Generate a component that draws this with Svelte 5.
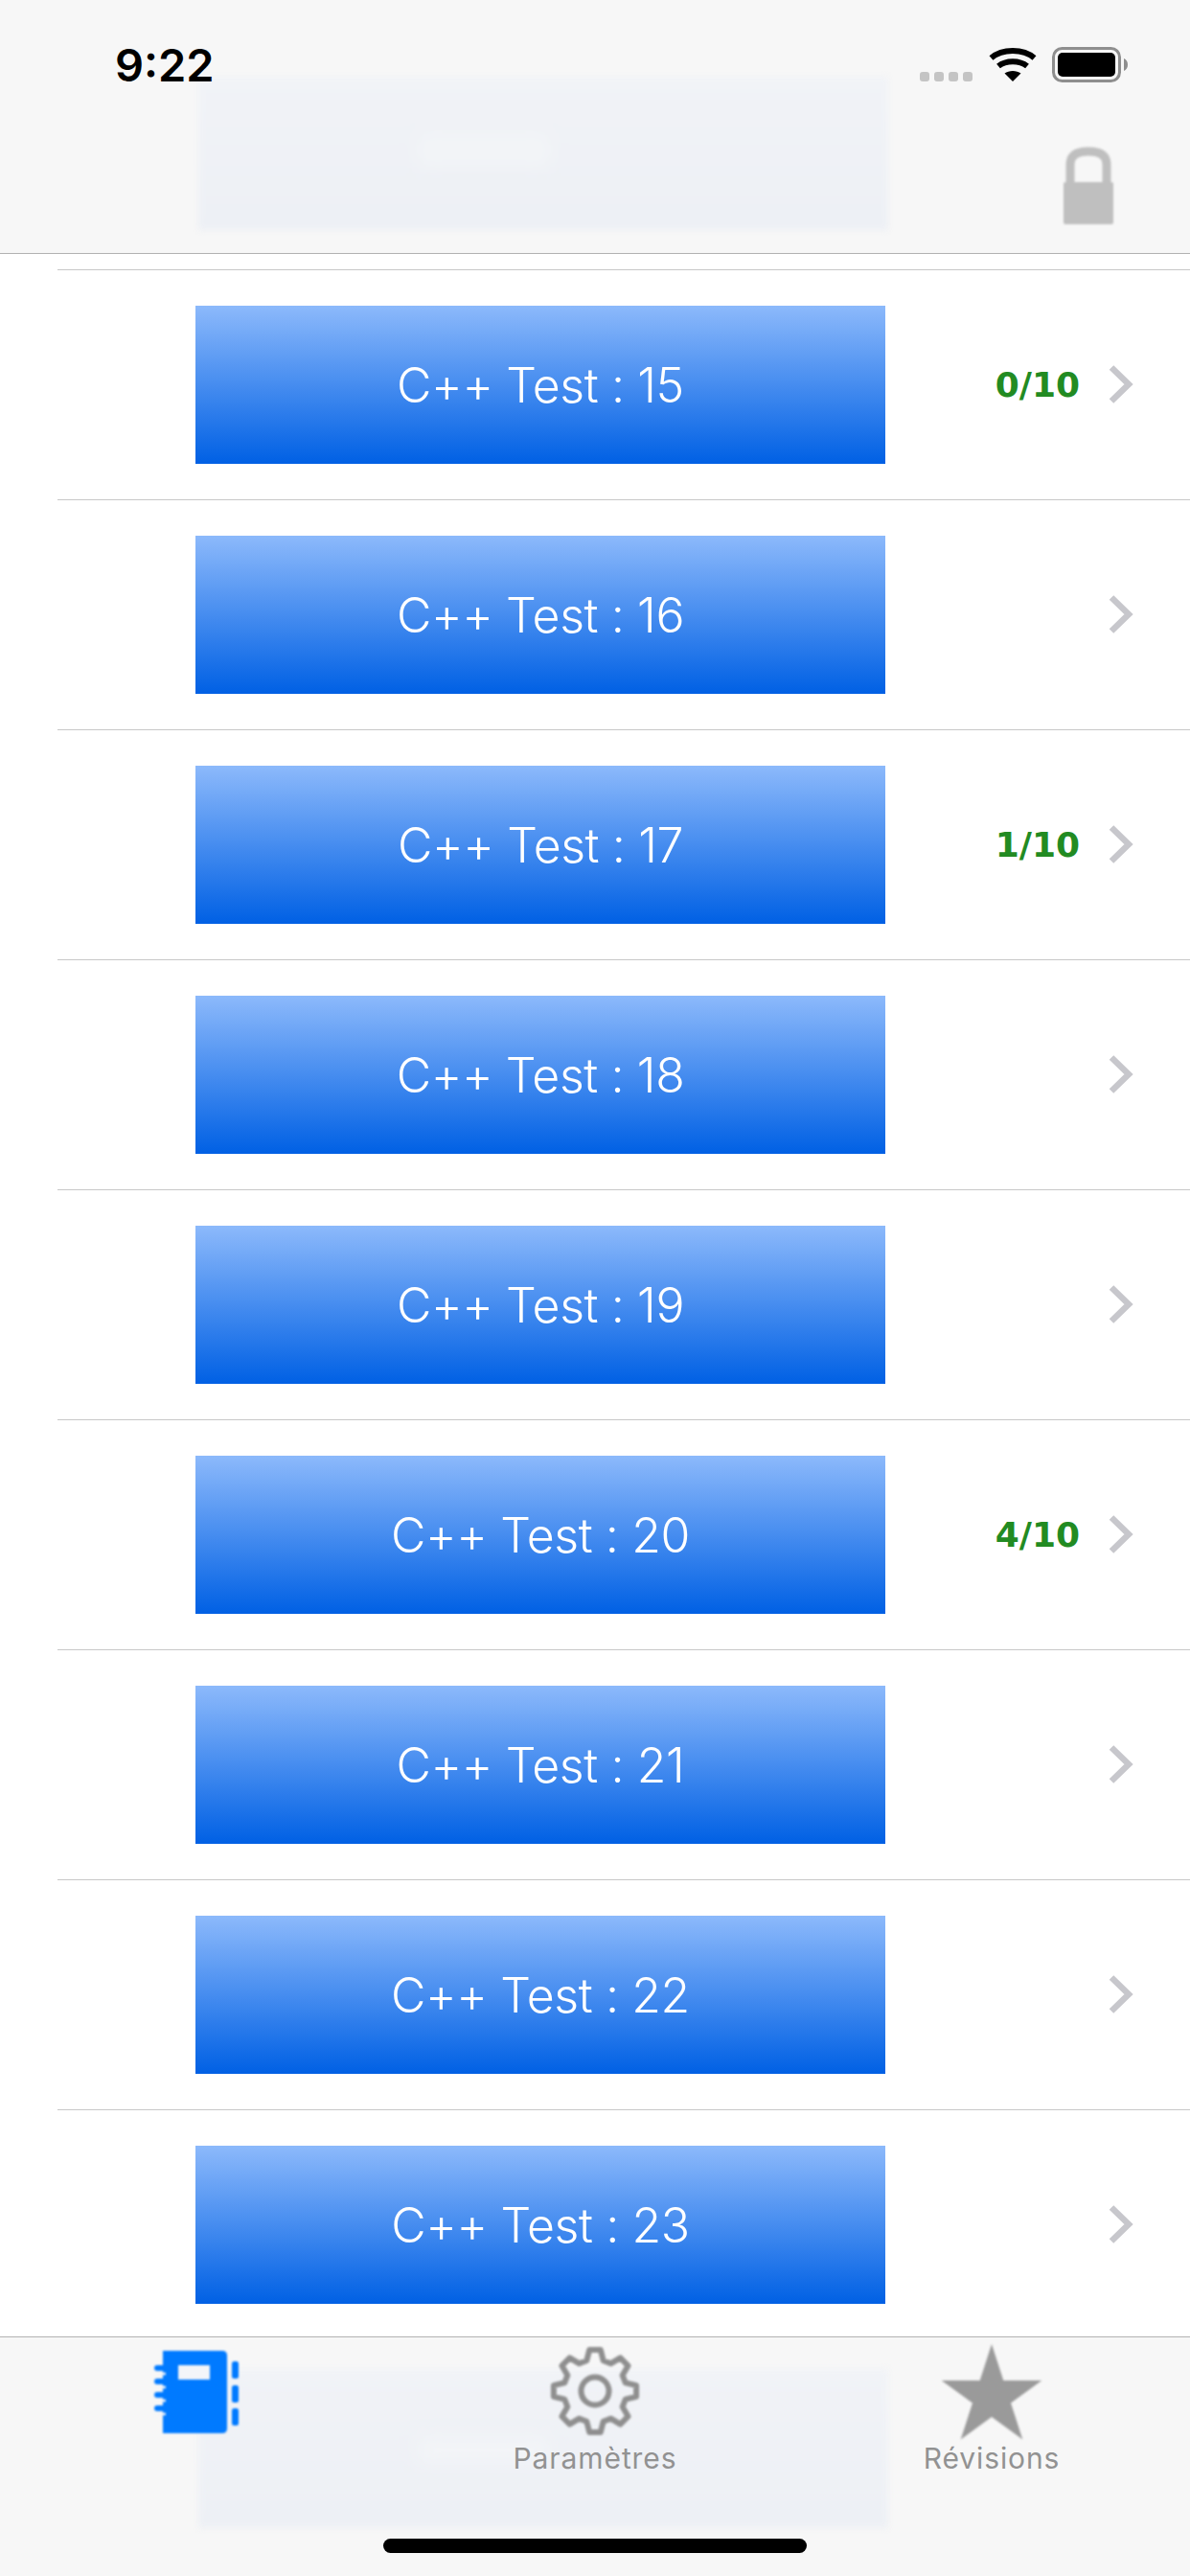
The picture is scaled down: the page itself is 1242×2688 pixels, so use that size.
<script>
  const rows = [
    { n: 15, score: '0/10' },
    { n: 16 },
    { n: 17, score: '1/10' },
    { n: 18 },
    { n: 19 },
    { n: 20, score: '4/10' },
    { n: 21 },
    { n: 22 },
    { n: 23 }
  ];

  function gearPath(cx, cy, outer, inner, teeth) {
    const step = (Math.PI * 2) / teeth;
    let d = '';
    for (let i = 0; i < teeth; i++) {
      const a = -Math.PI / 2 + i * step;
      const pts = [
        [inner, a - step * 0.34],
        [outer, a - step * 0.17],
        [outer, a + step * 0.17],
        [inner, a + step * 0.34]
      ];
      for (const [r, t] of pts) {
        d += (d ? 'L' : 'M') + (cx + r * Math.cos(t)).toFixed(1) + ' ' + (cy + r * Math.sin(t)).toFixed(1);
      }
    }
    return d + 'Z';
  }
  const gear = gearPath(50, 49, 43.5, 33, 8);

  function starPoints(cx, cy, R, r) {
    const pts = [];
    for (let i = 0; i < 10; i++) {
      const a = -Math.PI / 2 + (i * Math.PI) / 5;
      const rad = i % 2 ? r : R;
      pts.push((cx + rad * Math.cos(a)).toFixed(1) + ',' + (cy + rad * Math.sin(a)).toFixed(1));
    }
    return pts.join(' ');
  }
  const star = starPoints(55, 55, 55, 21);
</script>

<div class="screen">
  <header class="top">
    <div class="ghost ghost-top"><i class="smear"></i></div>
    <div class="status">
      <span class="time">9:22</span>
      <svg class="status-icons" width="217" height="37" viewBox="0 0 217 37">
        <g fill="#c4c4c4">
          <rect x="0" y="26" width="10" height="10" rx="3" />
          <rect x="15" y="26" width="10" height="10" rx="3" />
          <rect x="30" y="26" width="10" height="10" rx="3" />
          <rect x="45" y="26" width="10" height="10" rx="3" />
        </g>
        <g fill="none" stroke="#000" stroke-width="6">
          <path d="M74.500 11.500C86 1.500 108 1.500 119.500 11.500" />
          <path d="M82 20C90 13.500 104 13.500 112 20" />
        </g>
        <path d="M88.500 27.500C93 24 101 24 105.500 27.500L97 36Z" fill="#000" />
        <rect x="139.500" y="1.500" width="69" height="34" rx="9" fill="none" stroke="#8e8e8e" stroke-width="3" />
        <rect x="144" y="6" width="60" height="25" rx="5" fill="#000" />
        <path d="M213 12C215.500 13 217 15.500 217 18.500C217 21.500 215.500 24 213 25Z" fill="#8e8e8e" />
      </svg>
    </div>
    <svg class="lock" width="54" height="82" viewBox="0 0 54 82">
      <path d="M8 40V19C8 9 15 5 27 5C39 5 46 9 46 19V40" fill="none" stroke="#bfbfbf" stroke-width="9" />
      <rect x="1" y="37" width="52" height="44" rx="2" fill="#bfbfbf" />
    </svg>
  </header>

  <main class="list">
    {#each rows as row}
      <div class="row">
        <div class="btn">C++ Test : {row.n}</div>
        {#if row.score}
          <span class="score">{row.score}</span>
        {/if}
        <svg class="chev" width="26" height="40" viewBox="0 0 26 40">
          <path d="M3 2.500L21 20L3 37.500" fill="none" stroke="#c7c7cc" stroke-width="6.500" />
        </svg>
      </div>
    {/each}
  </main>

  <footer class="tabs">
    <div class="ghost ghost-bottom"><i class="smear"></i></div>
    <div class="tab">
      <svg class="icon" width="100" height="100" viewBox="5 0 100 100">
        <path d="M18 7H80Q85 7 85 12V88Q85 93 80 93H18Z" fill="#007aff" />
        <rect x="34" y="22" width="33" height="15" fill="#f3f5f9" />
        <g fill="#007aff">
          <rect x="90" y="18" width="7" height="18" rx="2.500" />
          <rect x="90" y="43" width="7" height="18" rx="2.500" />
          <rect x="90" y="67" width="7" height="18" rx="2.500" />
        </g>
        <g stroke="#007aff" stroke-width="6" stroke-linecap="round">
          <path d="M12 25H18" />
          <path d="M12 39H18" />
          <path d="M12 53H18" />
          <path d="M12 67H18" />
        </g>
        <g stroke="#f5f6f8" stroke-width="2.500">
          <path d="M15 31H21" />
          <path d="M15 45H21" />
          <path d="M15 59H21" />
          <path d="M15 73H21" />
        </g>
      </svg>
    </div>
    <div class="tab">
      <svg class="icon" width="100" height="100" viewBox="0 0 100 100">
        <path d={gear} fill="none" stroke="#8f8f8f" stroke-width="6" stroke-linejoin="round" />
        <circle cx="50" cy="49" r="14.500" fill="none" stroke="#8f8f8f" stroke-width="6" />
      </svg>
      <span class="label">Paramètres</span>
    </div>
    <div class="tab">
      <svg class="icon" width="110" height="100" viewBox="0 0 110 100">
        <polygon points={star} fill="#9a9a9a" />
      </svg>
      <span class="label">Révisions</span>
    </div>
    <div class="home"></div>
  </footer>
</div>

<style>
  :global(body) {
    margin: 0;
    background: #fff;
  }
  .screen {
    width: 1242px;
    height: 2688px;
    display: flex;
    flex-direction: column;
    overflow: hidden;
    font-family: Inter, "Liberation Sans", sans-serif;
    background: #fff;
  }
  .top {
    position: relative;
    flex: none;
    height: 264px;
    background: #f7f7f7;
    border-bottom: 1px solid #b2b2b2;
    display: flex;
    flex-direction: column;
    overflow: hidden;
  }
  .ghost {
    position: absolute;
    left: 207px;
    width: 720px;
    background: linear-gradient(#f1f3f7, #edf0f5);
    filter: blur(3px);
  }
  .smear {
    position: absolute;
    left: 228px;
    width: 140px;
    background: #f2f4f7;
    filter: blur(8px);
  }
  .ghost-top {
    top: 80px;
    height: 160px;
  }
  .ghost-top .smear {
    top: 60px;
    height: 34px;
  }
  .ghost-bottom {
    top: 33px;
    height: 166px;
  }
  .ghost-bottom .smear {
    top: 70px;
    height: 30px;
  }
  .status {
    position: relative;
    display: flex;
    justify-content: space-between;
    align-items: flex-start;
    padding: 49px 65px 0 120px;
  }
  .time {
    font-size: 47px;
    font-weight: 600;
    line-height: 37px;
    color: #000;
  }
  .status-icons {
    display: block;
  }
  .lock {
    position: relative;
    display: block;
    align-self: flex-end;
    margin: 67px 79px 0 0;
    filter: blur(1px);
  }
  .list {
    flex: 1;
    min-height: 0;
    overflow: hidden;
    padding-top: 16px;
  }
  .row {
    box-sizing: border-box;
    height: 240px;
    margin-left: 60px;
    padding: 37px 59px 0 144px;
    border-top: 1px solid #c8c8c8;
    display: flex;
    align-items: flex-start;
  }
  .btn {
    flex: none;
    width: 720px;
    height: 165px;
    display: flex;
    align-items: center;
    justify-content: center;
    color: #fff;
    font-size: 50px;
    font-weight: 350;
    letter-spacing: -0.4px;
    background: linear-gradient(#8cb9fb, #0060e4);
  }
  .score {
    margin-left: auto;
    height: 165px;
    line-height: 165px;
    font-family: "DejaVu Sans", sans-serif;
    font-weight: 700;
    font-size: 36px;
    color: #228b22;
  }
  .chev {
    flex: none;
    display: block;
    margin: 62px 0 0 30px;
  }
  .row .btn + .chev {
    margin-left: auto;
  }
  .tabs {
    position: relative;
    flex: none;
    box-sizing: border-box;
    height: 250px;
    background: #f7f7f7;
    border-top: 1px solid #b2b2b2;
    display: grid;
    grid-template-columns: repeat(3, 414px);
    align-items: start;
    overflow: hidden;
  }
  .tab {
    position: relative;
    display: flex;
    flex-direction: column;
    align-items: center;
    padding-top: 7px;
  }
  .icon {
    display: block;
    filter: blur(1px);
  }
  .label {
    font-size: 30px;
    letter-spacing: 0.9px;
    line-height: 36px;
    margin-top: 1px;
    color: #929292;
  }
  .home {
    position: absolute;
    left: 400px;
    top: 210px;
    width: 442px;
    height: 15px;
    border-radius: 8px;
    background: #000;
  }
</style>
